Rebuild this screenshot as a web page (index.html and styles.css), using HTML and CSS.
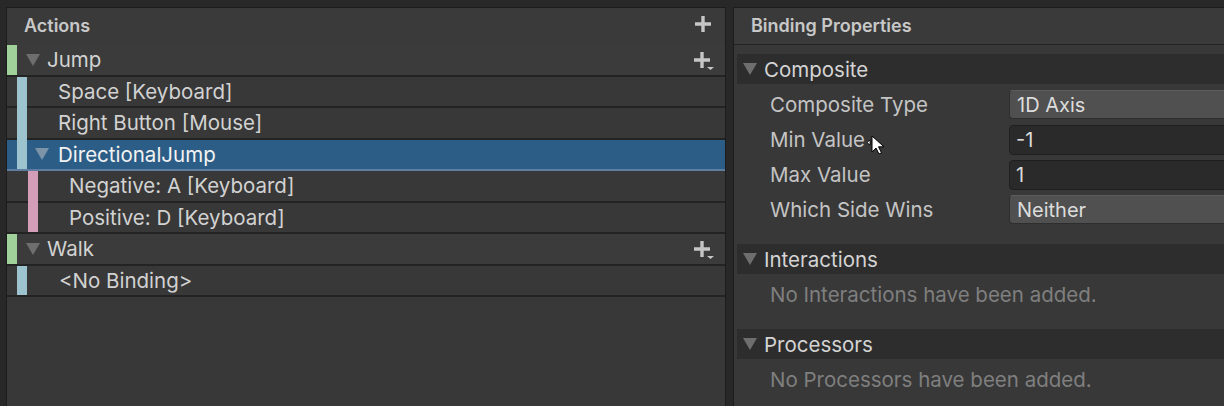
FILE: index.html
```html
<!DOCTYPE html>
<html>
<head>
<meta charset="utf-8">
<link rel="stylesheet" href="styles.css">
</head>
<body>
<div class="app">
  <section class="panel actions">
    <div class="panel-head">
      <span class="title">Actions</span>
      <svg class="plus" width="18" height="18" viewBox="0 0 18 18"><path d="M9 1v16M1 9h16" stroke="#c6c6c6" stroke-width="3.4" fill="none"/></svg>
    </div>
    <div class="tree">
      <div class="row action">
        <span class="bar green end"></span>
        <div class="content">
          <svg class="tri" width="14" height="12" viewBox="0 0 14 12"><path d="M0 0h14L7 12z" fill="#6e6e6e"/></svg>
          <span class="label">Jump</span>
          <svg class="plus-drop" width="22" height="20" viewBox="0 0 22 20"><path d="M9 1v16M1 9h16" stroke="#c6c6c6" stroke-width="3.4" fill="none"/><path d="M14 16h7l-3.5 3z" fill="#c6c6c6"/></svg>
        </div>
      </div>
      <div class="row binding">
        <span class="pad p1"></span>
        <span class="bar blue"></span>
        <div class="content"><span class="label">Space [Keyboard]</span></div>
      </div>
      <div class="row binding">
        <span class="pad p1"></span>
        <span class="bar blue"></span>
        <div class="content"><span class="label">Right Button [Mouse]</span></div>
      </div>
      <div class="row binding selected">
        <span class="pad p1"></span>
        <span class="bar blue end"></span>
        <div class="content comp">
          <svg class="tri" width="14" height="12" viewBox="0 0 14 12"><path d="M0 0h14L7 12z" fill="#7d93a8"/></svg>
          <span class="label">DirectionalJump</span>
        </div>
      </div>
      <div class="row binding">
        <span class="pad p2"></span>
        <span class="bar pink"></span>
        <div class="content"><span class="label">Negative: A [Keyboard]</span></div>
      </div>
      <div class="row binding">
        <span class="pad p2"></span>
        <span class="bar pink end"></span>
        <div class="content"><span class="label">Positive: D [Keyboard]</span></div>
      </div>
      <div class="row action">
        <span class="bar green end"></span>
        <div class="content">
          <svg class="tri" width="14" height="12" viewBox="0 0 14 12"><path d="M0 0h14L7 12z" fill="#6e6e6e"/></svg>
          <span class="label">Walk</span>
          <svg class="plus-drop" width="22" height="20" viewBox="0 0 22 20"><path d="M9 1v16M1 9h16" stroke="#c6c6c6" stroke-width="3.4" fill="none"/><path d="M14 16h7l-3.5 3z" fill="#c6c6c6"/></svg>
        </div>
      </div>
      <div class="row binding">
        <span class="pad p1"></span>
        <span class="bar blue end"></span>
        <div class="content"><span class="label nb">&lt;No Binding&gt;</span></div>
      </div>
    </div>
  </section>

  <section class="panel props">
    <div class="panel-head">
      <span class="title">Binding Properties</span>
    </div>
    <div class="props-body">
      <div class="fold-head">
        <svg class="tri" width="14" height="12" viewBox="0 0 14 12"><path d="M0 0h14L7 12z" fill="#6e6e6e"/></svg>
        <span>Composite</span>
      </div>
      <div class="fields">
        <div class="field-row">
          <span class="lbl">Composite Type</span>
          <div class="field drop">1D Axis</div>
        </div>
        <div class="field-row">
          <span class="lbl">Min Value</span>
          <div class="field text">-1</div>
        </div>
        <div class="field-row">
          <span class="lbl">Max Value</span>
          <div class="field text">1</div>
        </div>
        <div class="field-row">
          <span class="lbl">Which Side Wins</span>
          <div class="field drop">Neither</div>
        </div>
      </div>
      <div class="fold-head">
        <svg class="tri" width="14" height="12" viewBox="0 0 14 12"><path d="M0 0h14L7 12z" fill="#6e6e6e"/></svg>
        <span>Interactions</span>
      </div>
      <div class="empty">No Interactions have been added.</div>
      <div class="fold-head">
        <svg class="tri" width="14" height="12" viewBox="0 0 14 12"><path d="M0 0h14L7 12z" fill="#6e6e6e"/></svg>
        <span>Processors</span>
      </div>
      <div class="empty">No Processors have been added.</div>
    </div>
    <svg class="cursor" width="20" height="22" viewBox="0 0 20 22"><path d="M1 7.5L4 5v5z" fill="#fff" stroke="#000" stroke-width="0.8"/><path d="M6 1v16l4-4 3 6 2.5-1.2-3-6h5.5z" fill="#fff" stroke="#000" stroke-width="1"/></svg>
  </section>
</div>
</body>
</html>
```

FILE: styles.css
```css
* { box-sizing: border-box; }
html, body { margin: 0; padding: 0; }
body {
  background: #282828;
  font-family: Inter, "Noto Sans", "Liberation Sans", sans-serif;
  width: 1224px;
  height: 406px;
  overflow: hidden;
}
.app {
  display: flex;
  align-items: stretch;
  padding-top: 7px;
  padding-left: 6px;
  gap: 7px;
  height: 406px;
}
.panel {
  background: #383838;
  border: 1px solid #1c1c1c;
  border-bottom: none;
}
.actions { width: 720px; flex: none; }
.props { flex: 1; border-right: none; overflow: hidden; position: relative; }

.panel-head {
  height: 37px;
  display: flex;
  align-items: center;
  justify-content: space-between;
  background: #3a3a3a;
  font-weight: 600;
  font-size: 18px;
  color: #c8c8c8;
}
.actions .panel-head { padding: 0 13px 2px 17px; }
.props .panel-head { padding: 0 0 2px 17px; border-bottom: 1px solid #232323; }
.plus { display: block; margin-top: -3px; }

.row {
  display: flex;
  height: 31.5px;
  color: #d2d2d2;
  font-size: 20.5px;
}
.row.action { background: #3b3b3b; }
.row.binding { background: #383838; }
.row.selected { background: #2c5d87; color: #f2f2f2; }

.pad, .content { border-bottom: 2px solid #232323; }
.row.selected .pad, .row.selected .content, .row.selected .bar.end { border-bottom-color: #5d7ea0; }
.pad.p1 { width: 10px; }
.pad.p2 { width: 21px; }
.bar { width: 10px; flex: none; }
.bar.end { border-bottom: 2px solid #232323; }
.bar.green { background: #a1d19a; }
.bar.blue { background: #9dc3ce; }
.bar.pink { background: #d49db8; }

.content {
  flex: 1;
  display: flex;
  align-items: center;
  padding-left: 31px;
  padding-right: 10px;
}
.row.action .content { padding-left: 9px; }
.row.action .tri { margin-right: 7px; margin-top: 1px; }
.content.comp { padding-left: 8px; }
.content.comp .tri { margin-right: 9px; }
.label { flex: 1; white-space: nowrap; }
.label.nb { padding-left: 1px; }
.plus-drop { display: block; margin-top: 2px; }
.tri { display: block; flex: none; }

.props-body { padding: 9px 0 0 3px; }
.fold-head {
  height: 30px;
  display: flex;
  align-items: center;
  gap: 7px;
  padding-left: 6px;
  background: #2d2d2d;
  color: #d4d4d4;
  font-size: 20.5px;
}
.fields { padding: 3px 0 17px 33px; }
.field-row {
  height: 35px;
  display: flex;
  align-items: center;
  color: #c4c4c4;
  font-size: 20.5px;
}
.lbl { width: 239px; flex: none; white-space: nowrap; }
.field {
  flex: none;
  width: 300px;
  height: 29px;
  border-radius: 4px;
  display: flex;
  align-items: center;
  padding-left: 7px;
  color: #dcdcdc;
  font-size: 20px;
}
.field.drop { background: #505050; border: 1px solid #2e2e2e; border-top-color: #5c5c5c; }
.field.text { background: #2a2a2a; border: 1px solid #1f1f1f; height: 30px; padding-left: 6px; }
.empty {
  height: 55px;
  padding: 9px 0 0 33px;
  line-height: 24px;
  color: #7f7f7f;
  font-size: 20.5px;
}
.cursor { position: absolute; left: 132px; top: 127px; }
```
